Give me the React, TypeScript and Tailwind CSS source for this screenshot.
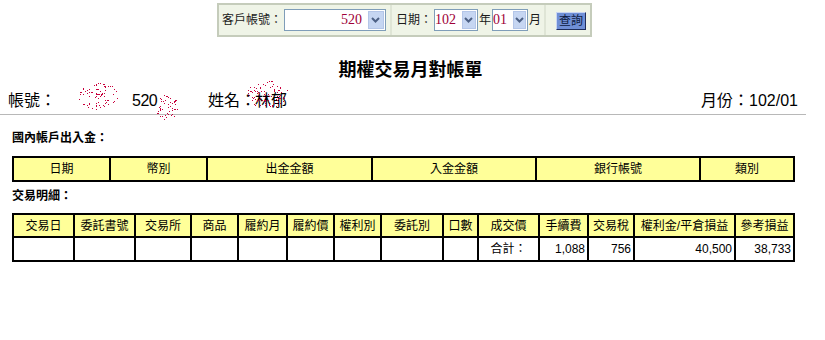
import React from "react";

// deterministic dots for the red "redacted" marks
function scribble(seed: number, w: number, h: number, n: number) {
    let s = seed;
    const rnd = () => {
        s = (s * 9301 + 49297) % 233280;
        return s / 233280;
    };
    const dots: { x: number; y: number }[] = [];
    while (dots.length < n) {
        const x = rnd() * w;
        const y = rnd() * h;
        const dx = (x - w / 2) / (w / 2);
        const dy = (y - h / 2) / (h / 2);
        if (dx * dx + dy * dy < 1) dots.push({ x: Math.round(x), y: Math.round(y) });
    }
    return dots;
}

function Scribble({ seed, w, h, n, className }: { seed: number; w: number; h: number; n: number; className: string }) {
    const dots = scribble(seed, w, h, n);
    return (
        <svg width={w} height={h} className={className}>
            {dots.map((d, i) => (
                <rect key={i} x={d.x} y={d.y} width="1" height="1" fill="#c8003c" />
            ))}
        </svg>
    );
}

function Select({ value, width }: { value: string; width: string }) {
    return (
        <div className={`flex items-center h-[22px] bg-white border border-[#7f9db9] ${width}`}>
            <span className="flex-1 text-right pr-[6px] text-[14px] text-[#a00038] font-['Liberation_Serif',serif] leading-none">{value}</span>
            <span className="w-[16px] h-[18px] mr-[1px] flex items-center justify-center bg-[#c6d6f2] border border-[#b4c6e8]">
                <svg width="9" height="6" viewBox="0 0 9 6">
                    <path d="M1 1 L4.5 4.5 L8 1" stroke="#4d6185" strokeWidth="2" fill="none" />
                </svg>
            </span>
        </div>
    );
}

const cjk = "font-['Liberation_Sans','Noto_Sans_CJK_TC',sans-serif]";

export default function App() {
    // last column left without a width so the table stays at 783px
    const cols1 = [
        ["日期", 97], ["幣別", 97], ["出金金額", 165], ["入金金額", 164], ["銀行帳號", 164], ["類別", 0],
    ] as const;
    const cols2 = [
        ["交易日", 61], ["委託書號", 61], ["交易所", 56], ["商品", 47], ["履約月", 49], ["履約價", 47],
        ["權利別", 47], ["委託別", 62], ["口數", 35], ["成交價", 61], ["手續費", 49], ["交易稅", 46],
        ["權利金/平倉損益", 101], ["參考損益", 0],
    ] as const;
    const row2 = ["", "", "", "", "", "", "", "", "", "合計：", "1,088", "756", "40,500", "38,733"];

    return (
        <div className={`w-[825px] h-[340px] bg-white text-black ${cjk}`}>
            <div className="w-[809px]">
                {/* query form */}
                <div className="pt-[3px] flex justify-center">
                    <div className="flex h-[34px] border-2 border-[#c5ccbb] bg-[#eff4e7] text-[12px] text-[#1a1a1a]">
                        <div className="flex items-center pl-[3px] pr-[4px]">
                            <span className="mr-[2px]">客戶帳號：</span>
                            <Select value="520" width="w-[102px]" />
                        </div>
                        <div className="w-[2px] bg-[#dfe5d6]"></div>
                        <div className="flex items-center pl-[4px] pr-[3px]">
                            <span className="mr-[2px]">日期：</span>
                            <Select value="102" width="w-[44px]" />
                            <span className="mx-[1px]">年</span>
                            <Select value="01" width="w-[36px]" />
                            <span className="ml-[1px]">月</span>
                        </div>
                        <div className="w-[2px] bg-[#dfe5d6]"></div>
                        <div className="flex items-start pt-[7px] pl-[10px] pr-[4px]">
                            <button className="h-[18px] px-[2px] bg-[#6f8fd6] border border-t-[#c9d6f3] border-l-[#c9d6f3] border-r-[#1e2d5a] border-b-[#1e2d5a] text-[12px] leading-none text-[#0c1a40]">查詢</button>
                        </div>
                    </div>
                </div>

                {/* title */}
                <div className="mt-[21px] h-[24px] text-center text-[18px] leading-[24px] font-bold pl-[12px]">期權交易月對帳單</div>

                {/* account line */}
                <div className="relative mt-[8px] h-[25px] flex items-center text-[16px] leading-[20px] pl-[8px] border-b border-[#b8b8b8] pb-[3px] w-[806px] whitespace-nowrap">
                    <span className="w-[124px] shrink-0">帳號：</span>
                    <span className="w-[76px] shrink-0 tracking-[-0.5px]">520</span>
                    <span className="w-[47px] shrink-0">姓名：</span>
                    <span>林郁</span>
                    <span className="ml-auto pr-[8px]">月份：102/01</span>
                    <Scribble seed={7} w={40} h={28} n={80} className="absolute left-[78px] top-[-8px]" />
                    <Scribble seed={19} w={22} h={26} n={50} className="absolute left-[156px] top-[4px]" />
                    <Scribble seed={31} w={42} h={28} n={90} className="absolute left-[246px] top-[-10px]" />
                </div>

                {/* deposits */}
                <div className="mt-[15px] pl-[12px] text-[12px] leading-[16px] font-bold">國內帳戶出入金：</div>
                <table className="ml-[12px] mt-[10px] table-fixed border-collapse text-[12px] w-[783px]">
                    <colgroup>
                        {cols1.map(([, w], i) => <col key={i} style={w ? { width: w } : undefined} />)}
                    </colgroup>
                    <tbody>
                        <tr className="h-[24px] bg-[#ffff99]">
                            {cols1.map(([t], i) => (
                                <td key={i} className="border-2 border-black text-center leading-[18px] p-0">{t}</td>
                            ))}
                        </tr>
                    </tbody>
                </table>

                {/* trades */}
                <div className="mt-[6px] pl-[12px] text-[12px] leading-[16px] font-bold">交易明細：</div>
                <table className="ml-[12px] mt-[9px] table-fixed border-collapse text-[12px] w-[783px]">
                    <colgroup>
                        {cols2.map(([, w], i) => <col key={i} style={w ? { width: w } : undefined} />)}
                    </colgroup>
                    <tbody>
                        <tr className="h-[23px] bg-[#ffff99]">
                            {cols2.map(([t], i) => (
                                <td key={i} className="border-2 border-black text-center leading-[18px] p-0 whitespace-nowrap">{t}</td>
                            ))}
                        </tr>
                        <tr className="h-[24px]">
                            {row2.map((t, i) => (
                                <td key={i} className={`border-2 border-black leading-[18px] py-0 ${i === 9 ? "text-center" : "text-right pr-[2px]"}`}>{t}</td>
                            ))}
                        </tr>
                    </tbody>
                </table>
            </div>
        </div>
    );
}
